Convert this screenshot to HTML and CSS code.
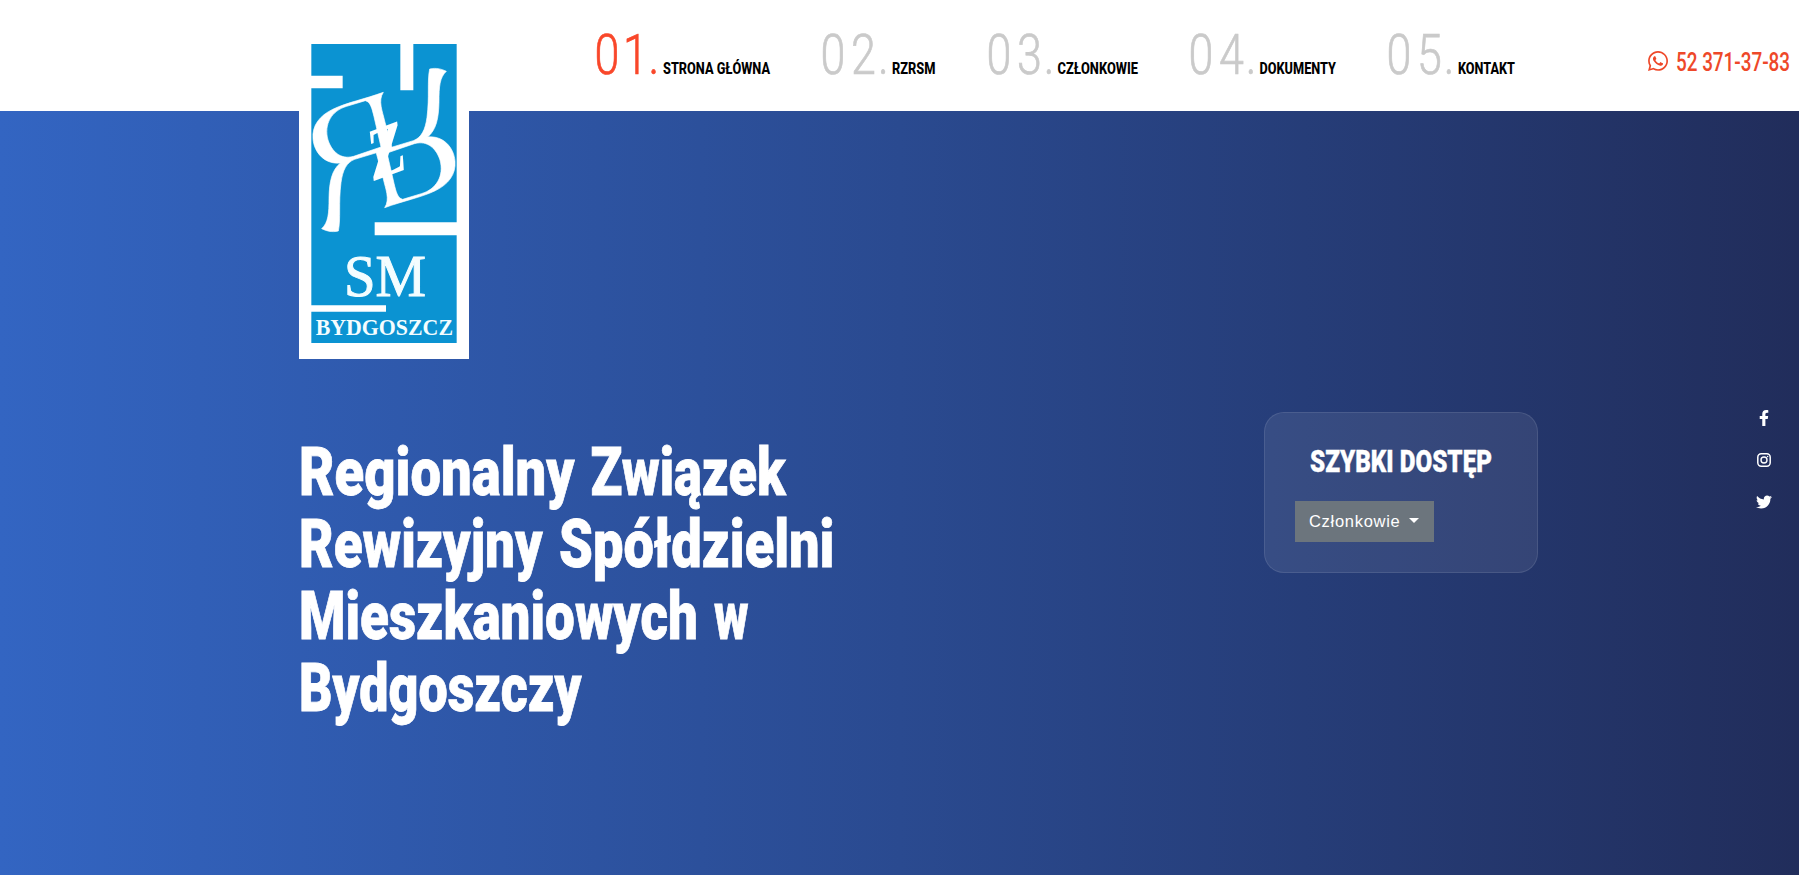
FILE: index.html
```html
<!DOCTYPE html>
<html lang="pl">
<head>
<meta charset="utf-8">
<title>Regionalny Związek Rewizyjny Spółdzielni Mieszkaniowych w Bydgoszczy</title>
<link rel="stylesheet" href="styles.css">
</head>
<body>
<header class="header">
  <a class="logo" href="#">
    <svg width="170" height="359" viewBox="27 -90 510 1077">
      <rect x="27" y="-90" width="510" height="1077" fill="#fff"/>
      <rect x="64" y="42" width="436" height="897" fill="#0b93d2"/>
      <path fill="#fff" d="M331 40h39v141h-39zM62 137h96v38H62zM254 577h248v39H254zM62 826h226v19H62z"/>
      <g fill="#fff">
        <path id="half" d="M280 187C225 207 170 218 130 237C88 257 66 287 69 326C72 368 105 404 151 399C125 421 118 455 117 505C117 550 115 578 95 596C107 602 125 608 145 603C153 565 145 520 153 458C158 420 170 397 194 388L306 354L284 273C278 245 263 212 280 187ZM226 212C241 215 246 235 252 260L273 351L191 379C150 390 125 363 114 330C101 282 125 242 170 229Z" fill-rule="evenodd" stroke="#fff" stroke-width="2"/>
        <use href="#half" transform="rotate(180 282 360)"/>
        <text class="logo-z" transform="matrix(.94 -.35 .15 1.3 244 456)">Z</text>
      </g>
      <text class="logo-sm" x="162" y="797" textLength="246" lengthAdjust="spacingAndGlyphs">SM</text>
      <text class="logo-city" x="77" y="915" textLength="412" lengthAdjust="spacingAndGlyphs">BYDGOSZCZ</text>
    </svg>
  </a>
  <nav class="nav">
    <a class="active" href="#"><svg width="173" height="60"><text class="num" x="0 35.5 67.5" transform="translate(-2.500 49) scale(.8 1)">01.</text><text class="label" x="66" y="49" textLength="107" lengthAdjust="spacingAndGlyphs">STRONA GŁÓWNA</text></svg></a>
    <a href="#"><svg width="113" height="60"><text class="num" x="0 38 72" transform="translate(-2.500 49) scale(.8 1)">02.</text><text class="label" x="69" y="49" textLength="43.500" lengthAdjust="spacingAndGlyphs">RZRSM</text></svg></a>
    <a href="#"><svg width="149" height="60"><text class="num" x="0 38 71.5" transform="translate(-2.500 49) scale(.8 1)">03.</text><text class="label" x="68.500" y="49" textLength="80.500" lengthAdjust="spacingAndGlyphs">CZŁONKOWIE</text></svg></a>
    <a href="#"><svg width="145" height="60"><text class="num" x="0 38 71.5" transform="translate(-2.500 49) scale(.8 1)">04.</text><text class="label" x="68.500" y="49" textLength="76.500" lengthAdjust="spacingAndGlyphs">DOKUMENTY</text></svg></a>
    <a href="#"><svg width="126" height="60"><text class="num" x="0 38 71.5" transform="translate(-2.500 49) scale(.8 1)">05.</text><text class="label" x="69" y="49" textLength="57" lengthAdjust="spacingAndGlyphs">KONTAKT</text></svg></a>
  </nav>
  <a class="phone" href="#">
    <svg width="20" height="20" viewBox="0 0 448 448"><path fill="currentColor" d="M380.900 65.100C339 23.100 283.200 0 223.900 0 101.500 0 1.900 99.600 1.900 222c0 39.100 10.200 77.300 29.600 111L0 448l117.700-30.900c32.400 17.700 68.900 27 106.100 27h.1c122.300 0 224.100-99.600 224.100-222 0-59.300-25.200-115-67.100-157zM223.900 406.700c-33.200 0-65.700-8.900-94-25.700l-6.700-4-69.800 18.300L72 327.200l-4.400-7c-18.500-29.400-28.200-63.300-28.200-98.200 0-101.700 82.800-184.500 184.600-184.500 49.300 0 95.600 19.200 130.400 54.100 34.800 34.900 56.200 81.200 56.100 130.500 0 101.800-84.900 184.600-186.600 184.600zm101.200-138.200c-5.500-2.800-32.800-16.200-37.900-18-5.100-1.900-8.800-2.800-12.500 2.800-3.700 5.600-14.300 18-17.600 21.800-3.200 3.700-6.500 4.200-12 1.400-32.600-16.300-54-29.100-75.500-66-5.700-9.800 5.700-9.100 16.300-30.300 1.800-3.700.9-6.900-.5-9.700-1.400-2.800-12.500-30.100-17.100-41.200-4.500-10.800-9.100-9.300-12.500-9.500-3.200-.2-6.900-.2-10.600-.2-3.700 0-9.700 1.400-14.800 6.900-5.100 5.600-19.400 19-19.400 46.300s19.900 53.700 22.600 57.400c2.800 3.700 39.100 59.700 94.800 83.800 35.200 15.200 49 16.500 66.600 13.900 10.700-1.600 32.800-13.400 37.400-26.400s4.600-24.100 3.200-26.400c-1.300-2.500-5-3.900-10.500-6.600z"/></svg>
    <svg width="114" height="30"><text class="phone-text" x="0" y="25" textLength="114" lengthAdjust="spacingAndGlyphs">52 371-37-83</text></svg>
  </a>
</header>
<main class="hero">
  <h1 class="title">
    <svg width="540" height="300">
      <text x="0" y="59" textLength="275.500" lengthAdjust="spacingAndGlyphs">Regionalny</text>
      <text x="291.500" y="59" textLength="195" lengthAdjust="spacingAndGlyphs">Związek</text>
      <text x="0" y="131" textLength="243.500" lengthAdjust="spacingAndGlyphs">Rewizyjny</text>
      <text x="260" y="131" textLength="275.500" lengthAdjust="spacingAndGlyphs">Spółdzielni</text>
      <text x="0" y="203" textLength="399" lengthAdjust="spacingAndGlyphs">Mieszkaniowych</text>
      <text x="415" y="203" textLength="34.500" lengthAdjust="spacingAndGlyphs">w</text>
      <text x="0" y="275" textLength="282.500" lengthAdjust="spacingAndGlyphs">Bydgoszczy</text>
    </svg>
  </h1>
  <section class="card">
    <svg width="184" height="40"><text class="card-title" x="1" y="30" textLength="182" lengthAdjust="spacingAndGlyphs">SZYBKI DOSTĘP</text></svg>
    <button class="dropdown">Członkowie<span class="caret"></span></button>
  </section>
  <div class="social">
    <svg width="16" height="16" viewBox="0 0 320 512"><path fill="#fff" d="M279.100 288l14.200-92.700h-88.900v-60.100c0-25.300 12.400-50.100 52.200-50.100h40.400V6.300S260.400 0 225.400 0c-73.200 0-121.100 44.400-121.100 124.700v70.600H22.900V288h81.400v224h100.200V288z"/></svg>
    <svg width="16" height="16" viewBox="0 0 16 16"><rect x="1.800" y="1.800" width="12.400" height="12.400" rx="3.400" fill="none" stroke="#fff" stroke-width="1.500"/><circle cx="8" cy="8" r="3" fill="none" stroke="#fff" stroke-width="1.400"/><circle cx="11.600" cy="4.500" r=".8" fill="#fff"/></svg>
    <svg width="16" height="16" viewBox="0 0 512 512"><path fill="#fff" d="M459.400 151.700c.3 4.500.3 9.100.3 13.600 0 138.700-105.600 298.600-298.600 298.600-59.500 0-114.700-17.200-161.100-47.100 8.400 1 16.600 1.300 25.300 1.300 49.100 0 94.200-16.600 130.300-44.800-46.100-1-84.800-31.200-98.100-72.800 6.500 1 13 1.600 19.800 1.600 9.400 0 18.800-1.300 27.600-3.600-48.100-9.700-84.100-52-84.100-103v-1.300c14 7.800 30.200 12.700 47.400 13.300-28.300-18.800-46.800-51-46.800-87.400 0-19.500 5.200-37.400 14.300-53 51.700 63.700 129.300 105.300 216.400 109.800-1.600-7.800-2.600-15.900-2.600-24 0-57.800 46.800-104.900 104.900-104.900 30.200 0 57.500 12.700 76.700 33.100 23.700-4.500 46.500-13.300 66.600-25.300-7.800 24.400-24.400 44.800-46.100 57.800 21.100-2.300 41.600-8.100 60.400-16.200-14.300 20.800-32.200 39.300-52.600 54.300z"/></svg>
  </div>
</main>
</body>
</html>
```
FILE: styles.css
```css
* { box-sizing: border-box; }
body {
  margin: 0;
  height: 875px;
  overflow: hidden;
  font-family: Roboto, "Liberation Sans", sans-serif;
}
svg { display: block; overflow: visible; }
a { color: #000; text-decoration: none; }

.header {
  position: relative;
  display: flex;
  justify-content: space-between;
  height: 111px;
  padding: 25px 9px 0 597px;
  background: #fff;
}
.logo { position: absolute; left: 299px; top: 0; z-index: 2; }
.logo text { fill: #f4fdff; font-family: "Liberation Serif", serif; }
.logo .logo-z { font-size: 172px; font-weight: 700; fill: #fff; }
.logo .logo-sm { font-size: 177px; stroke: #f4fdff; stroke-width: 3; }
.logo .logo-city { font-size: 68px; font-weight: 700; }

.nav { display: flex; gap: 53px; }
.num { font-size: 56px; font-weight: 300; fill: #cacaca; stroke: #cacaca; stroke-width: .7; }
.active .num { fill: #f9472a; stroke: #f9472a; }
.label { font-size: 17px; font-weight: 800; fill: #000; }

.phone { display: flex; gap: 8px; color: #ee4829; }
.phone > svg:first-child { margin-top: 26px; }
.phone > svg:last-child { margin-top: 21px; }
.phone-text { font-size: 25px; font-weight: 500; fill: #ee4829; }

.hero {
  display: flex;
  height: 764px;
  padding-left: 299px;
  background: linear-gradient(90deg, #3365c2 0%, #2a4a90 50%, #212d5b 100%);
}
.title { width: 965px; margin: 325px 0 0; }
.title text { font-size: 67.500px; font-weight: 900; fill: #fff; stroke: #fff; stroke-width: .8; }

.card {
  display: flex;
  flex-direction: column;
  width: 274px;
  height: 161px;
  margin-top: 301px;
  padding: 29px 30px;
  border: 1px solid rgba(255, 255, 255, .1);
  border-radius: 20px;
  background: rgba(255, 255, 255, .08);
}
.card > svg { align-self: center; }
.card-title { font-size: 32px; font-weight: 900; fill: #fff; stroke: #fff; stroke-width: .4; }
.dropdown {
  display: flex;
  align-items: center;
  width: 139px;
  height: 41px;
  margin-top: 19px;
  padding: 0 14px;
  border: 0;
  background: #6c757d;
  color: #fff;
  font: 16.500px "Liberation Sans", sans-serif;
  letter-spacing: .7px;
}
.caret {
  margin: -3px 0 0 9px;
  border-top: 5px solid #fff;
  border-left: 5px solid transparent;
  border-right: 5px solid transparent;
}
.social {
  display: flex;
  flex-direction: column;
  gap: 26px;
  margin: 299px 0 0 218px;
}
```
